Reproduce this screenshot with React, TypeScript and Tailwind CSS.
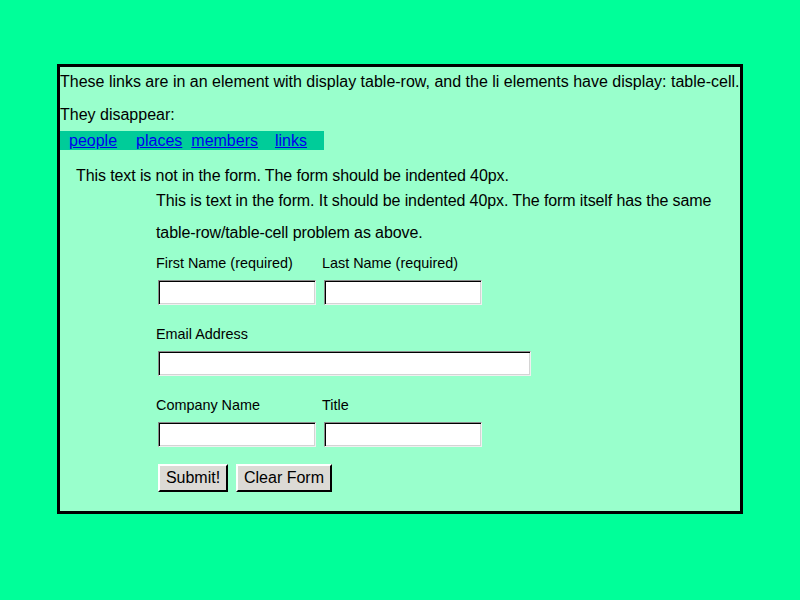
export default function App() {
  const input =
    "ml-[2px] h-[25px] bg-white border border-t-[#8a8a8a] border-l-[#8a8a8a] border-r-[#f0f0f0] border-b-[#f0f0f0] shadow-[inset_1px_1px_0_#000,inset_-1px_-1px_0_#d4d4d4]";
  const button =
    "h-[28px] bg-[#dcdad5] text-[16px] text-black border-2 border-t-white border-l-white border-r-black border-b-black leading-none";

  return (
    <div className="min-h-[600px] w-[800px] bg-[#00ff99] pt-[64px] font-['Liberation_Sans',Arial,sans-serif] text-black">
      <div className="ml-[57px] w-[686px] border-[3px] border-black bg-[#99ffcc] pb-[19px]">
        <p className="text-[16px] leading-[30px] whitespace-nowrap">
          These links are in an element with display table-row, and the li elements have display: table-cell.
        </p>
        <p className="mt-[3px] text-[16px] leading-[30px]">They disappear:</p>

        {/* nav row */}
        <div className="mt-[1px] flex h-[19px] w-[264px] items-center bg-[#00cc99] text-[16px] leading-[19px]">
          <a href="#" className="ml-[9px] text-[#0000ee] underline">people</a>
          <a href="#" className="ml-[19px] text-[#0000ee] underline">places</a>
          <a href="#" className="ml-[9px] text-[#0000ee] underline">members</a>
          <a href="#" className="ml-[17px] text-[#0000ee] underline">links</a>
        </div>

        <p className="mt-[16px] ml-[16px] text-[16px] leading-[20px] tracking-[-0.1px]">
          This text is not in the form. The form should be indented 40px.
        </p>

        <form className="ml-[96px]" onSubmit={(e) => e.preventDefault()}>
          <p className="-mt-[1px] text-[16px] leading-[32px] tracking-[-0.1px]">
            This is text in the form. It should be indented 40px. The form itself has the same table-row/table-cell problem as above.
          </p>

          <div className="mt-[6px] flex text-[14.4px]">
            <div className="w-[166px]">
              <label className="block leading-[16px]">First Name (required)</label>
              <input type="text" className={`mt-[9px] w-[158px] ${input}`} />
            </div>
            <div className="w-[166px]">
              <label className="block leading-[16px]">Last Name (required)</label>
              <input type="text" className={`mt-[9px] w-[158px] ${input}`} />
            </div>
          </div>

          <div className="mt-[21px] text-[14.4px]">
            <label className="block leading-[16px]">Email Address</label>
            <input type="text" className={`mt-[9px] w-[373px] ${input}`} />
          </div>

          <div className="mt-[21px] flex text-[14.4px]">
            <div className="w-[166px]">
              <label className="block leading-[16px]">Company Name</label>
              <input type="text" className={`mt-[9px] w-[158px] ${input}`} />
            </div>
            <div className="w-[166px]">
              <label className="block leading-[16px]">Title</label>
              <input type="text" className={`mt-[9px] w-[158px] ${input}`} />
            </div>
          </div>

          <div className="mt-[17px] ml-[2px] flex gap-[8px]">
            <button type="submit" className={`w-[70px] ${button}`}>Submit!</button>
            <button type="reset" className={`w-[96px] ${button}`}>Clear Form</button>
          </div>
        </form>
      </div>
    </div>
  );
}
